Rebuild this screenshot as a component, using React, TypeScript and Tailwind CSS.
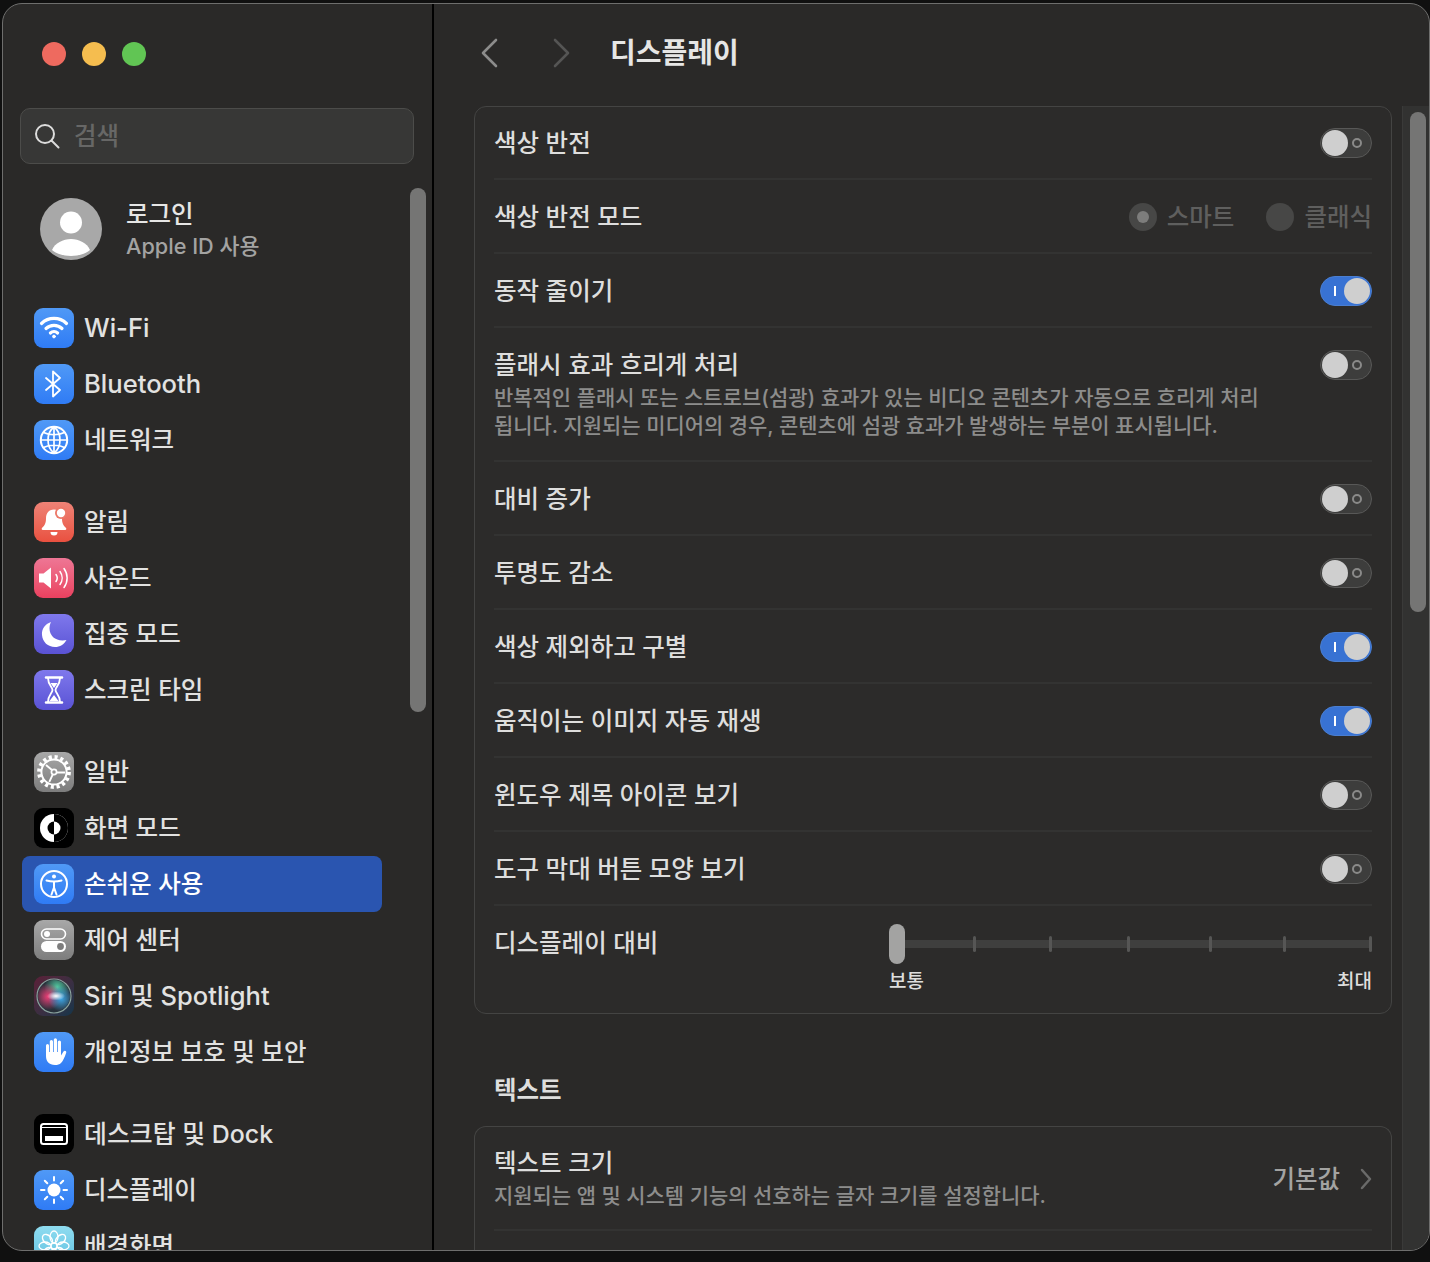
import type { ReactNode } from 'react';

const BLUE = 'bg-linear-to-b from-[#5099f6] to-[#2f7bf5]';

// --- sidebar icon drawings, all on a 40x40 canvas ---

const WifiIcon = () => (
  <svg viewBox="0 0 40 40" className="h-10 w-10" fill="none" stroke="#fff" strokeLinecap="round" strokeWidth="3.2">
    <path d="M7.500 15.500a18 18 0 0 1 25 0" />
    <path d="M12 20.500a11.600 11.600 0 0 1 16 0" />
    <path d="M16.400 25a5.400 5.400 0 0 1 7.200 0" />
    <circle cx="20" cy="28.500" r="1.400" fill="#fff" strokeWidth="1" />
  </svg>
);

const BluetoothIcon = () => (
  <svg viewBox="0 0 40 40" className="h-10 w-10" fill="none" stroke="#fff" strokeWidth="1.800" strokeLinejoin="round" strokeLinecap="round">
    <path d="M12 14l14 12-7 6.500V7.500l7 6.500-14 12" />
  </svg>
);

const GlobeIcon = () => (
  <svg viewBox="0 0 40 40" className="h-10 w-10" fill="none" stroke="#fff" strokeWidth="1.700">
    <circle cx="20" cy="20" r="13.200" strokeWidth="2" />
    <path d="M20 7v26M7 20h26M9.500 12.500c6 3 15 3 21 0M9.500 27.500c6-3 15-3 21 0" />
    <path d="M20 7c-8 6-8 20 0 26M20 7c8 6 8 20 0 26" />
  </svg>
);

const BellIcon = () => (
  <svg viewBox="0 0 40 40" className="h-10 w-10" fill="#fff">
    <path d="M20 7.500c-5.500 0-8 4-8 9 0 5-1.500 7-4 9.500-.8.8-.3 2 .8 2h22.400c1.100 0 1.600-1.200.8-2-2.500-2.500-4-4.500-4-9.500 0-5-2.500-9-8-9z" />
    <path d="M16.500 30h7a3.500 3.500 0 0 1-7 0z" />
    <circle cx="27" cy="11" r="6" fill="#ec7868" />
    <circle cx="27" cy="11" r="4.200" />
  </svg>
);

const SoundIcon = () => (
  <svg viewBox="0 0 40 40" className="h-10 w-10" fill="none">
    <path d="M5 15.500h4.500L17 9.500v21l-7.500-6H5z" fill="#fff" />
    <path d="M22 16.500a6 6 0 0 1 0 7M26 13.500a11 11 0 0 1 0 13M30 10.500a16 16 0 0 1 0 19" stroke="#fff" strokeWidth="1.500" strokeLinecap="round" />
  </svg>
);

const MoonIcon = () => (
  <svg viewBox="0 0 40 40" className="h-10 w-10" fill="#fff">
    <path d="M17 8c-6 2-9.500 7-9 13 .5 7 6 12 13 12 5 0 9-2.500 11.500-7-1 .3-2.500.5-4 .5-7.500 0-13-5-13-12 0-2.500.5-4.500 1.500-6.500z" />
  </svg>
);

const HourglassIcon = () => (
  <svg viewBox="0 0 40 40" className="h-10 w-10" fill="none" stroke="#fff" strokeLinecap="round">
    <path d="M12 7.500h16M12 32.500h16" strokeWidth="2.600" />
    <path d="M14 8c0 7 4.500 9 4.500 12S14 25 14 32M26 8c0 7-4.500 9-4.500 12S26 25 26 32" strokeWidth="1.800" />
    <path d="M16.500 13h7l-3.500 5zM20 25l4.500 6h-9z" fill="#fff" strokeWidth="0" />
  </svg>
);

const GearIcon = () => (
  <svg viewBox="0 0 40 40" className="h-10 w-10" fill="none" stroke="#fff">
    <circle cx="20" cy="20" r="15" strokeWidth="3.800" strokeDasharray="3.100 2.800" />
    <circle cx="20" cy="20" r="12.600" strokeWidth="2" />
    <circle cx="20" cy="20" r="2.600" strokeWidth="1.700" />
    <path d="M18 18l-6-5M22.500 20.500h8.500M18.800 22.300l-3.500 7.500" strokeWidth="1.900" />
  </svg>
);

const AppearanceIcon = () => (
  <svg viewBox="0 0 40 40" className="h-10 w-10">
    <circle cx="20" cy="20" r="14" fill="#fff" />
    <path d="M20 6a14 14 0 0 1 0 28z" fill="#000" />
    <path d="M20 13.500a6.500 6.500 0 0 1 0 13z" fill="#fff" />
    <path d="M20 13.500a6.500 6.500 0 0 0 0 13z" fill="#000" />
  </svg>
);

const AccessibilityIcon = () => (
  <svg viewBox="0 0 40 40" className="h-10 w-10" fill="none" stroke="#fff">
    <circle cx="20" cy="20" r="13" strokeWidth="2" />
    <circle cx="20" cy="12.500" r="2" fill="#fff" strokeWidth="0" />
    <path d="M12.500 16.500c5 1.300 10 1.300 15 0M20 17.500v6M20 23.500l-2.500 7M20 23.500l2.500 7" strokeWidth="2" strokeLinecap="round" />
  </svg>
);

const ControlIcon = () => (
  <svg viewBox="0 0 40 40" className="h-10 w-10">
    <rect x="7.500" y="9" width="24" height="10" rx="5" fill="none" stroke="#fff" strokeWidth="1.600" />
    <circle cx="13" cy="14" r="3" fill="#fff" />
    <rect x="7" y="21" width="25" height="11" rx="5.500" fill="#fff" />
    <circle cx="26.500" cy="26.500" r="3.400" fill="#7d7d7d" />
  </svg>
);

const SiriIcon = () => (
  <svg viewBox="0 0 40 40" className="h-10 w-10">
    <defs>
      <radialGradient id="siriPink" cx="0.32" cy="0.52" r="0.42">
        <stop offset="0" stopColor="#ef3f78" />
        <stop offset="1" stopColor="#ef3f78" stopOpacity="0" />
      </radialGradient>
      <radialGradient id="siriBlue" cx="0.72" cy="0.58" r="0.4">
        <stop offset="0" stopColor="#3fa8e8" />
        <stop offset="1" stopColor="#3fa8e8" stopOpacity="0" />
      </radialGradient>
      <radialGradient id="siriGreen" cx="0.6" cy="0.22" r="0.4">
        <stop offset="0" stopColor="#52c9a0" />
        <stop offset="1" stopColor="#52c9a0" stopOpacity="0" />
      </radialGradient>
      <radialGradient id="siriWhite" cx="0.5" cy="0.5" r="0.5">
        <stop offset="0" stopColor="#fff" />
        <stop offset="1" stopColor="#fff" stopOpacity="0" />
      </radialGradient>
    </defs>
    <circle cx="20" cy="20" r="17" fill="#27303a" stroke="#8aa39e" strokeWidth="1.200" />
    <circle cx="20" cy="20" r="16" fill="url(#siriGreen)" />
    <circle cx="20" cy="20" r="16" fill="url(#siriPink)" />
    <circle cx="20" cy="20" r="16" fill="url(#siriBlue)" />
    <ellipse cx="22" cy="20" rx="9" ry="4.500" fill="url(#siriWhite)" />
  </svg>
);

const HandIcon = () => (
  <svg viewBox="0 0 40 40" className="h-10 w-10" fill="#fff">
    <path d="M12 13.500a1.500 1.500 0 0 1 3 0V20h.8V9.500a1.600 1.600 0 0 1 3.200 0V20h.8V7.800a1.600 1.600 0 0 1 3.200 0V20h.8V10a1.600 1.600 0 0 1 3.200 0v13.500l2.500-4c1-1.500 3.300-.500 2.700 1.200-1.500 4.300-3.200 8.300-5.200 10.300-1.500 1.500-3.500 2-6 2-6 0-9-3.500-9-9z" />
  </svg>
);

const DockIcon = () => (
  <svg viewBox="0 0 40 40" className="h-10 w-10" fill="none">
    <rect x="7" y="10" width="26" height="20" rx="2.500" stroke="#fff" strokeWidth="2" />
    <path d="M7 13.500h26" stroke="#fff" strokeWidth="1" />
    <rect x="11" y="22" width="18" height="5" fill="#fff" />
  </svg>
);

const SunIcon = () => (
  <svg viewBox="0 0 40 40" className="h-10 w-10" fill="#fff" stroke="#fff" strokeWidth="2" strokeLinecap="round">
    <circle cx="20" cy="20" r="6.500" strokeWidth="0" />
    <path d="M20 7v3.500M20 29.500V33M7 20h3.500M29.500 20H33M10.800 10.800l2.500 2.500M26.700 26.700l2.500 2.500M10.800 29.200l2.500-2.500M26.700 13.300l2.500-2.500" />
  </svg>
);

const FlowerIcon = () => (
  <svg viewBox="0 0 40 40" className="h-10 w-10" fill="none" stroke="#fff" strokeWidth="1.300">
    <circle cx="20" cy="20" r="3" />
    <ellipse cx="20" cy="11" rx="4" ry="6" />
    <ellipse cx="20" cy="29" rx="4" ry="6" />
    <ellipse cx="11" cy="20" rx="6" ry="4" />
    <ellipse cx="29" cy="20" rx="6" ry="4" />
    <ellipse cx="13.500" cy="13.500" rx="4" ry="6" transform="rotate(-45 13.500 13.500)" />
    <ellipse cx="26.500" cy="13.500" rx="4" ry="6" transform="rotate(45 26.500 13.500)" />
    <ellipse cx="13.500" cy="26.500" rx="4" ry="6" transform="rotate(45 13.500 26.500)" />
    <ellipse cx="26.500" cy="26.500" rx="4" ry="6" transform="rotate(-45 26.500 26.500)" />
  </svg>
);

type NavItem = { label: string; bg: string; icon: ReactNode; active?: boolean; size?: string };

const NAV_GROUPS: NavItem[][] = [
  [
    { label: 'Wi-Fi', bg: BLUE, icon: <WifiIcon />, size: 'text-[25.6px]' },
    { label: 'Bluetooth', bg: BLUE, icon: <BluetoothIcon />, size: 'text-[25.6px]' },
    { label: '네트워크', bg: BLUE, icon: <GlobeIcon /> },
  ],
  [
    { label: '알림', bg: 'bg-linear-to-b from-[#ee8276] to-[#e9503f]', icon: <BellIcon /> },
    { label: '사운드', bg: 'bg-linear-to-b from-[#ee7695] to-[#e9405f]', icon: <SoundIcon /> },
    { label: '집중 모드', bg: 'bg-linear-to-b from-[#7f78ec] to-[#5a52d4]', icon: <MoonIcon /> },
    { label: '스크린 타임', bg: 'bg-linear-to-b from-[#7f78ec] to-[#5a52d4]', icon: <HourglassIcon /> },
  ],
  [
    { label: '일반', bg: 'bg-linear-to-b from-[#a8a8a8] to-[#7d7d7d]', icon: <GearIcon /> },
    { label: '화면 모드', bg: 'bg-black', icon: <AppearanceIcon /> },
    { label: '손쉬운 사용', bg: BLUE, icon: <AccessibilityIcon />, active: true },
    { label: '제어 센터', bg: 'bg-linear-to-b from-[#a8a8a8] to-[#7d7d7d]', icon: <ControlIcon /> },
    { label: 'Siri 및 Spotlight', bg: 'bg-linear-to-br from-[#5a1f38] to-[#10354a]', icon: <SiriIcon />, size: 'text-[25.5px]' },
    { label: '개인정보 보호 및 보안', bg: BLUE, icon: <HandIcon /> },
  ],
  [
    { label: '데스크탑 및 Dock', bg: 'bg-black', icon: <DockIcon />, size: 'text-[24.9px]' },
    { label: '디스플레이', bg: BLUE, icon: <SunIcon /> },
    { label: '배경화면', bg: 'bg-linear-to-b from-[#8fdcf0] to-[#5cbfe0]', icon: <FlowerIcon /> },
  ],
];

function NavRow({ label, bg, icon, active, size }: NavItem) {
  return (
    <div className={`ml-[19px] flex h-14 w-[360px] items-center gap-[10px] rounded-lg pl-3 ${active ? 'bg-[#2a55b0] text-white' : 'text-[#e2e2e1]'}`}>
      <div className={`h-10 w-10 shrink-0 overflow-hidden rounded-[9px] ${bg}`}>{icon}</div>
      <span className={`whitespace-nowrap leading-none ${size ?? 'text-[24.5px]'}`}>{label}</span>
    </div>
  );
}

function Sidebar() {
  return (
    <aside className="relative h-full w-[431px] shrink-0 overflow-hidden border-r-2 border-black">
      {/* traffic lights */}
      <div className="flex h-[104px] items-start gap-4 pl-[39px] pt-[38px]">
        <span className="h-6 w-6 rounded-full bg-[#ee6a5f]" />
        <span className="h-6 w-6 rounded-full bg-[#f5bd4f]" />
        <span className="h-6 w-6 rounded-full bg-[#61c554]" />
      </div>

      <div className="ml-[17px] flex h-14 w-[394px] items-center gap-[13px] rounded-[10px] border border-[#4c4c4a] bg-[#373736] pl-3">
        <svg viewBox="0 0 28 28" className="h-[28px] w-[28px]" fill="none" stroke="#dcdcdc" strokeWidth="2" strokeLinecap="round">
          <circle cx="12" cy="12" r="9" />
          <path d="M18.500 18.500l7 7" />
        </svg>
        <span className="text-[24.5px] leading-none text-[#676766]">검색</span>
      </div>

      <div className="ml-[37px] mt-[34px] flex items-center gap-6">
        <svg viewBox="0 0 62 62" className="h-[62px] w-[62px]">
          <defs>
            <clipPath id="avatarClip">
              <circle cx="31" cy="31" r="31" />
            </clipPath>
          </defs>
          <circle cx="31" cy="31" r="31" fill="#a8a8a8" />
          <circle cx="31" cy="24.500" r="11" fill="#fff" />
          <path d="M12 52c3-7 11-11 19-11s16 4 19 11c-5 4-12 6-19 6s-14-2-19-6z" fill="#fff" clipPath="url(#avatarClip)" />
        </svg>
        <div className="flex flex-col gap-[8px]">
          <span className="text-[24.5px] leading-[26px] text-[#e6e6e5]">로그인</span>
          <span className="text-[21.7px] leading-[22px] text-[#a3a3a2]">Apple ID 사용</span>
        </div>
      </div>

      <nav className="mt-[40px] flex flex-col gap-[26px]">
        {NAV_GROUPS.map((group, i) => (
          <div key={i} className="flex flex-col">
            {group.map((item) => (
              <NavRow key={item.label} {...item} />
            ))}
          </div>
        ))}
      </nav>

      {/* overlay scrollbar */}
      <div className="absolute left-[407px] top-[184px] h-[524px] w-4 rounded-full bg-[#757574]" />
    </aside>
  );
}

function Toggle({ on }: { on?: boolean }) {
  if (on) {
    return (
      <div className="flex h-[30px] w-[52px] shrink-0 items-center justify-between rounded-full border border-[#4a7ed0] bg-[#3872d3] pl-[13px] pr-[1px]">
        <span className="h-[10px] w-[2px] bg-white" />
        <span className="h-[26px] w-[26px] rounded-full bg-[#cfcfcf]" />
      </div>
    );
  }
  return (
    <div className="flex h-[30px] w-[52px] shrink-0 items-center justify-between rounded-full border border-[#585857] bg-[#3d3d3c] pl-[1px] pr-[9px]">
      <span className="h-[26px] w-[26px] rounded-full bg-[#cfcfcf]" />
      <span className="h-[10px] w-[10px] rounded-full border-2 border-[#8a8a89]" />
    </div>
  );
}

function Row({ title, on }: { title: string; on?: boolean }) {
  return (
    <div className="flex h-[74px] items-center justify-between border-b-2 border-[#333332] pt-[2px]">
      <span className="text-[24.5px] leading-none text-[#dededd]">{title}</span>
      <Toggle on={on} />
    </div>
  );
}

function Radio({ label, selected }: { label: string; selected?: boolean }) {
  return (
    <div className="flex items-center gap-[10px]">
      <span className="flex h-[28px] w-[28px] items-center justify-center rounded-full bg-[#474746]">
        {selected && <span className="h-3 w-3 rounded-full bg-[#7d7d7c]" />}
      </span>
      <span className="text-[24.5px] leading-none text-[#5f5f5e]">{label}</span>
    </div>
  );
}

function SliderRow() {
  return (
    <div className="flex h-[107px] items-start justify-between">
      <span className="pt-[25px] text-[24.5px] leading-none text-[#dededd]">디스플레이 대비</span>
      <div className="w-[483px] pt-[18px]">
        <div className="relative h-10">
          <div className="absolute left-[4px] right-0 top-[16px] h-2 bg-[#3f3f3e]" />
          <span className="absolute left-[84px] top-[12px] h-4 w-[3px] rounded-full bg-[#565655]" />
          <span className="absolute left-[160px] top-[12px] h-4 w-[3px] rounded-full bg-[#565655]" />
          <span className="absolute left-[238px] top-[12px] h-4 w-[3px] rounded-full bg-[#565655]" />
          <span className="absolute left-[320px] top-[12px] h-4 w-[3px] rounded-full bg-[#565655]" />
          <span className="absolute left-[394px] top-[12px] h-4 w-[3px] rounded-full bg-[#565655]" />
          <span className="absolute left-[480px] top-[12px] h-4 w-[3px] rounded-full bg-[#565655]" />
          <span className="absolute left-0 top-0 h-10 w-4 rounded-full bg-[#a3a3a2]" />
        </div>
        <div className="mt-[6px] flex justify-between text-[19px] leading-6 text-[#dededd]">
          <span>보통</span>
          <span>최대</span>
        </div>
      </div>
    </div>
  );
}

function Content() {
  return (
    <div className="w-[918px] shrink-0">
      <section className="rounded-xl border border-[#444443] bg-[#2c2b2a] px-[19px]">
        <div className="-mt-px">
          <Row title="색상 반전" />
        </div>
        <div className="flex h-[74px] items-center justify-between border-b-2 border-[#333332] pt-[2px]">
          <span className="text-[24.5px] leading-none text-[#dededd]">색상 반전 모드</span>
          <div className="flex gap-[32px]">
            <Radio label="스마트" selected />
            <Radio label="클래식" />
          </div>
        </div>
        <Row title="동작 줄이기" on />
        <div className="flex h-[134px] items-start justify-between border-b-2 border-[#333332] pt-[22px]">
          <div className="w-[790px]">
            <div className="text-[24.5px] leading-[30px] text-[#dededd]">플래시 효과 흐리게 처리</div>
            <p className="mt-[4px] text-[20.95px] leading-[28px] text-[#8d8d8c]">
              반복적인 플래시 또는 스트로브(섬광) 효과가 있는 비디오 콘텐츠가 자동으로 흐리게 처리
              <br />
              됩니다. 지원되는 미디어의 경우, 콘텐츠에 섬광 효과가 발생하는 부분이 표시됩니다.
            </p>
          </div>
          <Toggle />
        </div>
        <Row title="대비 증가" />
        <Row title="투명도 감소" />
        <Row title="색상 제외하고 구별" on />
        <Row title="움직이는 이미지 자동 재생" on />
        <Row title="윈도우 제목 아이콘 보기" />
        <Row title="도구 막대 버튼 모양 보기" />
        <SliderRow />
      </section>

      <h2 className="ml-5 mt-[61px] text-[24.5px] font-bold leading-[30px] text-[#dededd]">텍스트</h2>

      <section className="mt-[21px] rounded-t-xl border border-b-0 border-[#444443] bg-[#2c2b2a] px-[19px]">
        <div className="flex h-[104px] items-center justify-between border-b-2 border-[#333332] pt-[2px]">
          <div>
            <div className="text-[24.5px] leading-[30px] text-[#dededd]">텍스트 크기</div>
            <p className="mt-[4px] text-[20.95px] leading-[28px] text-[#8d8d8c]">지원되는 앱 및 시스템 기능의 선호하는 글자 크기를 설정합니다.</p>
          </div>
          <div className="flex items-center gap-[20px]">
            <span className="text-[24.5px] leading-none text-[#a3a3a2]">기본값</span>
            <svg viewBox="0 0 12 22" className="h-[22px] w-3" fill="none" stroke="#6a6a69" strokeWidth="2.500" strokeLinecap="round" strokeLinejoin="round">
              <path d="M2 2l8 9-8 9" />
            </svg>
          </div>
        </div>
        <div className="h-[60px]" />
      </section>
    </div>
  );
}

export default function App() {
  return (
    <div
      className="h-[1262px] w-[1430px] overflow-hidden bg-[#101010] pb-[11px] pl-[2px] pt-[3px] font-medium"
      style={{ fontFamily: 'Inter, "Noto Sans CJK KR", sans-serif' }}
    >
      <div className="flex h-[1248px] overflow-hidden rounded-[20px] border border-[#6e6e6d] bg-[#2a2928]">
        <Sidebar />
        <main className="flex min-w-0 flex-1 flex-col">
          <header className="flex h-[102px] shrink-0 items-start gap-[41px] pl-[46px] pt-[34px]">
            <svg viewBox="0 0 18 30" className="h-[30px] w-[18px]" fill="none" stroke="#8c8c8b" strokeWidth="2.600" strokeLinecap="round" strokeLinejoin="round">
              <path d="M16 2L3 15l13 13" />
            </svg>
            <div className="ml-[14px] flex items-center gap-[39px]">
              <svg viewBox="0 0 18 30" className="h-[30px] w-[18px]" fill="none" stroke="#555554" strokeWidth="2.600" strokeLinecap="round" strokeLinejoin="round">
                <path d="M2 2l13 13L2 28" />
              </svg>
              <h1 className="text-[28px] font-semibold leading-[30px] text-[#e6e6e5]">디스플레이</h1>
            </div>
          </header>
          <div className="flex min-h-0 flex-1 overflow-hidden pl-[40px]">
            <Content />
            <div className="ml-[10px] flex-1 border-l border-[#3a3a39] bg-[#323231] pl-[7px] pt-[6px]">
              <div className="h-[500px] w-4 rounded-full bg-[#757574]" />
            </div>
          </div>
        </main>
      </div>
    </div>
  );
}
